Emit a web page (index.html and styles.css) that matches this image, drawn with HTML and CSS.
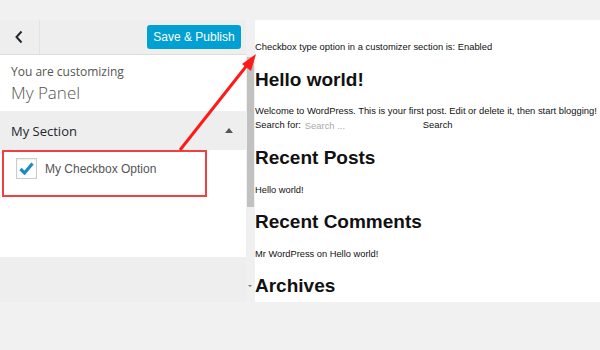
FILE: index.html
```html
<!DOCTYPE html>
<html lang="en">
<head>
    <meta charset="UTF-8">
    <title>Customizer Checkbox</title>
    <link rel="stylesheet" href="styles.css">
</head>
<body>
    <div class="frame">
        <div class="sidebar">
            <div class="panel">
                <div class="header">
                    <div class="back">
                        <svg width="10" height="14" viewBox="0 0 10 14"><path d="M7.5 1.5 L2.5 7 L7.5 12.5" fill="none" stroke="#23282d" stroke-width="2"/></svg>
                    </div>
                    <button class="publish">Save &amp; Publish</button>
                </div>
                <div class="info">
                    <div class="info-label">You are customizing</div>
                    <div class="info-title">My Panel</div>
                </div>
                <div class="section-head">
                    <span>My Section</span>
                    <span class="caret"></span>
                </div>
                <div class="controls">
                    <div class="highlight">
                        <label class="option">
                            <span class="checkbox">
                                <svg width="15" height="13" viewBox="0 0 15 13"><path d="M1.5 7 L5.5 11 L13.5 1.5" fill="none" stroke="#1e8cbe" stroke-width="3.2"/></svg>
                            </span>
                            My Checkbox Option
                        </label>
                    </div>
                </div>
                <div class="footer"></div>
            </div>
            <div class="scrollbar">
                <div class="thumb"></div>
                <div class="down"></div>
            </div>
        </div>
        <div class="preview">
            <p class="note">Checkbox type option in a customizer section is: Enabled</p>
            <h1>Hello world!</h1>
            <p class="post">Welcome to WordPress. This is your first post. Edit or delete it, then start blogging!</p>
            <form class="search">
                <span>Search for:</span>
                <input type="text" placeholder="Search ...">
                <span>Search</span>
            </form>
            <h2>Recent Posts</h2>
            <p class="small">Hello world!</p>
            <h2>Recent Comments</h2>
            <p class="small">Mr WordPress on Hello world!</p>
            <h2>Archives</h2>
        </div>
    </div>

    <svg class="arrow" width="600" height="350" viewBox="0 0 600 350">
        <line x1="180" y1="150" x2="248" y2="64" stroke="#ff1a1a" stroke-width="3"/>
        <polygon points="256,54 251,71 242,64" fill="#ff1a1a"/>
    </svg>
</body>
</html>
```

FILE: styles.css
```css
body {
    margin: 0;
    padding-top: 20px;
    background-color: #f1f1f1;
    font-family: "Liberation Sans", Arial, sans-serif;
    position: relative;
    height: 330px;
    overflow: hidden;
}
.frame {
    display: flex;
    height: 282px;
}
.sidebar {
    display: flex;
    width: 255px;
}
.panel {
    width: 246px;
    display: flex;
    flex-direction: column;
    background-color: #fff;
}
.header {
    height: 34px;
    background-color: #eee;
    border-bottom: 1px solid #ddd;
    display: flex;
    align-items: center;
}
.back {
    width: 40px;
    height: 34px;
    border-right: 1px solid #e2e2e2;
    display: flex;
    align-items: center;
    justify-content: center;
    box-sizing: border-box;
    padding-right: 2px;
}
.publish {
    margin-left: auto;
    margin-right: 5px;
    width: 94px;
    height: 24px;
    background-color: #00a0d2;
    color: #fff;
    border: none;
    border-radius: 3px;
    font-family: "Liberation Sans", Arial, sans-serif;
    font-size: 12px;
    padding: 0;
}
.info {
    height: 56px;
    padding: 10px 11px 0;
    box-sizing: border-box;
    color: #555;
}
.info-label {
    font-family: "Open Sans", sans-serif;
    font-size: 12px;
    line-height: 14px;
}
.info-title {
    font-family: "Open Sans", sans-serif;
    font-weight: 300;
    font-size: 17px;
    line-height: 22px;
    margin-top: 3px;
}
.section-head {
    height: 39px;
    background-color: #eee;
    display: flex;
    align-items: center;
    justify-content: space-between;
    padding: 0 13px 0 11px;
    font-family: "Open Sans", sans-serif;
    font-size: 13px;
    color: #23282d;
}
.caret {
    width: 0;
    height: 0;
    border-left: 4px solid transparent;
    border-right: 4px solid transparent;
    border-bottom: 5px solid #555;
}
.controls {
    height: 107px;
}
.highlight {
    margin-left: 2px;
    width: 205px;
    height: 47px;
    border: 2px solid #f04040;
    box-sizing: border-box;
    padding: 6px 0 0 12px;
}
.option {
    display: flex;
    align-items: center;
    gap: 8px;
    font-family: "Liberation Sans", Arial, sans-serif;
    font-size: 12px;
    color: #555;
}
.checkbox {
    width: 21px;
    height: 21px;
    border: 1px solid #ccc;
    box-sizing: border-box;
    display: flex;
    align-items: center;
    justify-content: center;
    background-color: #fff;
    box-shadow: inset 0 1px 2px rgba(0,0,0,0.08);
}
.footer {
    flex: 1;
    background-color: #eee;
}
.scrollbar {
    width: 9px;
    background-color: #f0f0f0;
    margin-top: 35px;
    position: relative;
}
.thumb {
    margin: 2px 1px 0;
    height: 150px;
    background-color: #c1c1c1;
}
.down {
    position: absolute;
    bottom: 15px;
    left: 2px;
    width: 0;
    height: 0;
    border-left: 2px solid transparent;
    border-right: 2px solid transparent;
    border-top: 2px solid #777;
}
.preview {
    flex: 1;
    background-color: #fff;
    overflow: hidden;
    padding-top: 21px;
    color: #111;
    white-space: nowrap;
}
.preview p {
    margin: 0;
}
.note {
    font-size: 9.4px;
    line-height: 12px;
}
h1 {
    font-size: 19px;
    line-height: 24px;
    margin: 15px 0 0;
}
.post {
    font-size: 9.4px;
    line-height: 14px;
    margin-top: 12px !important;
}
.search {
    display: flex;
    align-items: center;
    font-size: 9.4px;
    line-height: 14px;
    height: 14px;
}
.search input {
    border: none;
    width: 118px;
    padding: 0 0 0 4px;
    font-family: "Liberation Sans", Arial, sans-serif;
    font-size: 9.4px;
    outline: none;
}
.search input::placeholder {
    color: #aaa;
}
h2 {
    font-size: 19px;
    line-height: 24px;
    margin: 14px 0 0;
}
.small {
    font-size: 9.3px;
    line-height: 12px;
    margin-top: 14px !important;
}
.arrow {
    position: absolute;
    top: 0;
    left: 0;
    pointer-events: none;
}
```
